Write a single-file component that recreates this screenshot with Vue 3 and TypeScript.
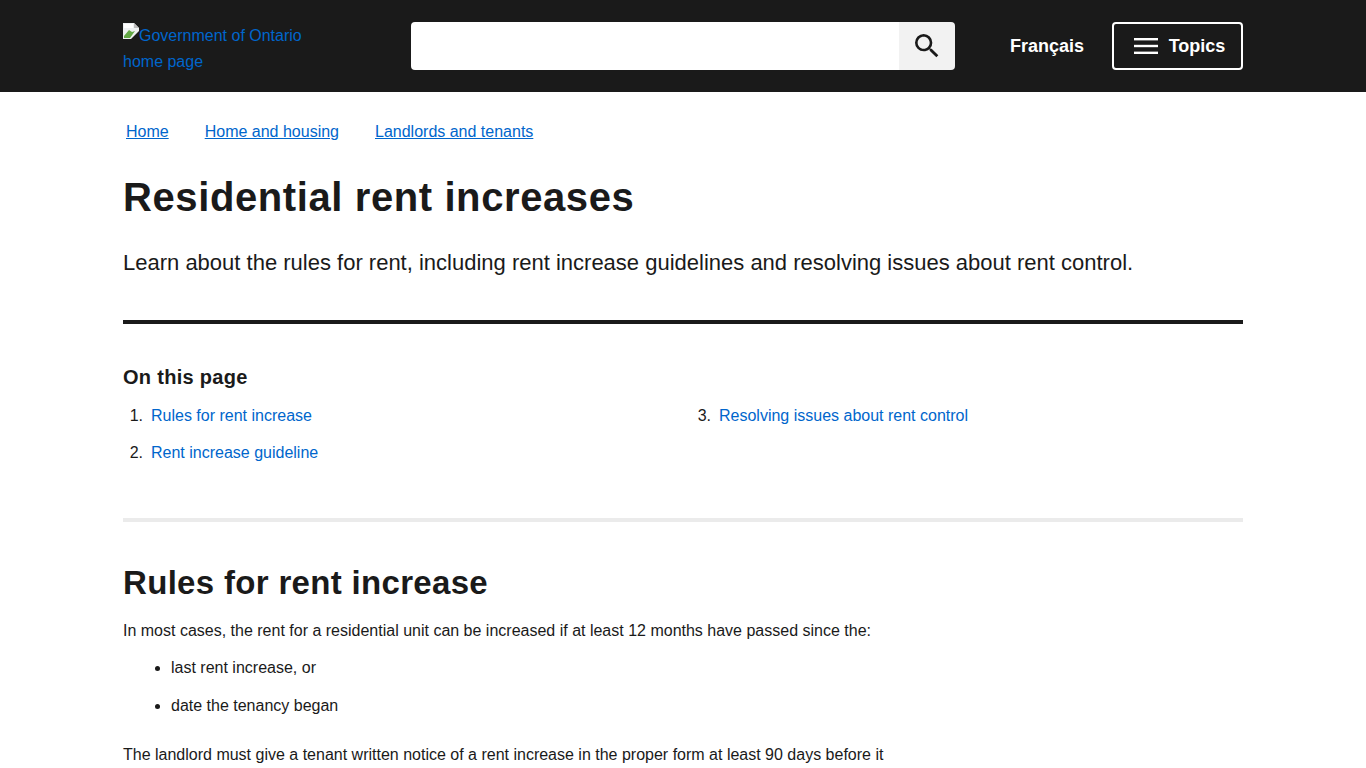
<script setup lang="ts">
const crumbs = ['Home', 'Home and housing', 'Landlords and tenants']
const tocLeft = [
  { n: 1, label: 'Rules for rent increase' },
  { n: 2, label: 'Rent increase guideline' },
]
const tocRight = [{ n: 3, label: 'Resolving issues about rent control' }]
</script>

<template>
  <header class="top">
    <div class="wrap top-in">
      <a class="logo" href="#">
        <svg class="broken" width="16" height="16" viewBox="0 0 16 16" aria-hidden="true">
          <path d="M0 0H11L16 5V8L8 16H0Z" fill="#eef1f2" />
          <path d="M11 0L16 5H11Z" fill="#bdbdbd" />
          <path d="M1 15V13L6 7L9 9L12 8L7 15Z" fill="#63a845" />
          <path d="M1 1H10V5H1Z" fill="#ffffff" />
        </svg>Government of Ontario<br />home page
      </a>
      <form class="search" @submit.prevent>
        <input class="search-input" type="text" aria-label="Search" />
        <button class="search-btn" type="button" aria-label="Search">
          <svg width="32" height="32" viewBox="0 0 24 24" fill="#1a1a1a">
            <path d="M15.5 14h-.79l-.28-.27A6.47 6.47 0 0 0 16 9.5 6.5 6.5 0 1 0 9.5 16c1.61 0 3.09-.59 4.23-1.57l.27.28v.79l5 4.99L20.49 19l-4.99-5zm-6 0C7.01 14 5 11.99 5 9.5S7.01 5 9.5 5 14 7.01 14 9.5 11.99 14 9.5 14z" />
          </svg>
        </button>
      </form>
      <a class="lang" href="#">Français</a>
      <button class="topics" type="button">
        <svg width="24" height="16" viewBox="0 0 24 16" fill="#fff" aria-hidden="true">
          <rect y="0" width="24" height="2.4" />
          <rect y="6.8" width="24" height="2.4" />
          <rect y="13.6" width="24" height="2.4" />
        </svg>
        <span>Topics</span>
      </button>
    </div>
  </header>

  <main class="wrap">
    <nav class="crumbs">
      <a v-for="c in crumbs" :key="c" href="#">{{ c }}</a>
    </nav>
    <h1>Residential rent increases</h1>
    <p class="lead">Learn about the rules for rent, including rent increase guidelines and resolving issues about rent control.</p>
    <hr class="rule-dark" />

    <h2 class="toc-title">On this page</h2>
    <div class="toc">
      <ol>
        <li v-for="t in tocLeft" :key="t.n">
          <span class="num">{{ t.n }}.</span><a href="#">{{ t.label }}</a>
        </li>
      </ol>
      <ol>
        <li v-for="t in tocRight" :key="t.n">
          <span class="num">{{ t.n }}.</span><a href="#">{{ t.label }}</a>
        </li>
      </ol>
    </div>
    <hr class="rule-light" />

    <h2 class="section">Rules for rent increase</h2>
    <p class="body">In most cases, the rent for a residential unit can be increased if at least 12 months have passed since the:</p>
    <ul>
      <li>last rent increase, or</li>
      <li>date the tenancy began</li>
    </ul>
    <p class="body">The landlord must give a tenant written notice of a rent increase in the proper form at least 90 days before it</p>
  </main>
</template>

<style>
html, body { overflow: hidden; background: #fff; }
</style>

<style scoped>
.wrap {
  width: 1120px;
  margin: 0 auto;
  font-family: "Liberation Sans", Arial, sans-serif;
  color: #1a1a1a;
  font-size: 16px;
}
.top { background: #1a1a1a; height: 92px; }
.top-in { display: flex; align-items: center; height: 92px; }
.logo {
  width: 288px;
  padding-top: 6px;
  color: #0066cc;
  text-decoration: none;
  line-height: 26px;
  flex: none;
}
.broken { vertical-align: 2px; }
.search { display: flex; width: 544px; height: 48px; border-radius: 4px; overflow: hidden; flex: none; }
.search-input { flex: 1; border: 0; background: #fff; padding: 0; min-width: 0; }
.search-btn {
  width: 56px;
  border: 0;
  padding: 0;
  background: #f2f2f2;
  display: flex;
  align-items: center;
  justify-content: center;
}
.lang {
  margin-left: 55px;
  color: #fff;
  font-weight: 700;
  font-size: 18px;
  text-decoration: none;
}
.topics {
  margin-left: auto;
  width: 131px;
  height: 48px;
  border: 2px solid #fff;
  border-radius: 4px;
  background: transparent;
  color: #fff;
  font: 700 18px "Liberation Sans", Arial, sans-serif;
  display: flex;
  align-items: center;
  justify-content: center;
  gap: 11px;
  padding: 0 0 0 4px;
}
.crumbs { display: flex; gap: 36px; padding: 31px 0 0 3px; line-height: 18px; }
a { color: #0066cc; }
h1 {
  margin: 31px 0 0;
  font-size: 40px;
  line-height: 50px;
  font-weight: 700;
  letter-spacing: 0.6px;
}
.lead { margin: 26px 0 0; font-size: 22px; line-height: 30px; }
.rule-dark { margin: 42px 0 0; border: 0; height: 4px; background: #1a1a1a; }
.toc-title { margin: 40px 0 0; font-size: 20px; line-height: 26px; font-weight: 700; letter-spacing: 0.3px; }
.toc { display: grid; grid-template-columns: 1fr 1fr; column-gap: 16px; }
ol { list-style: none; margin: 0; padding: 0; }
.toc ol { margin-top: 14px; }
.toc li { display: flex; line-height: 24px; margin-bottom: 13px; }
.toc li a { text-decoration: none; }
.num { width: 28px; text-align: right; padding-right: 8px; box-sizing: border-box; flex: none; }
.rule-light { margin: 40px 0 0; border: 0; height: 4px; background: #ebebeb; }
.section { margin: 41px 0 0; font-size: 33px; line-height: 40px; font-weight: 700; letter-spacing: 0.32px; }
.body { margin: 16px 0 0; line-height: 24px; width: 800px; }
ul { margin: 13px 0 0; padding: 0 0 0 48px; }
ul li { line-height: 24px; margin-bottom: 14px; }
ul + .body { margin-top: 25px; }
</style>
